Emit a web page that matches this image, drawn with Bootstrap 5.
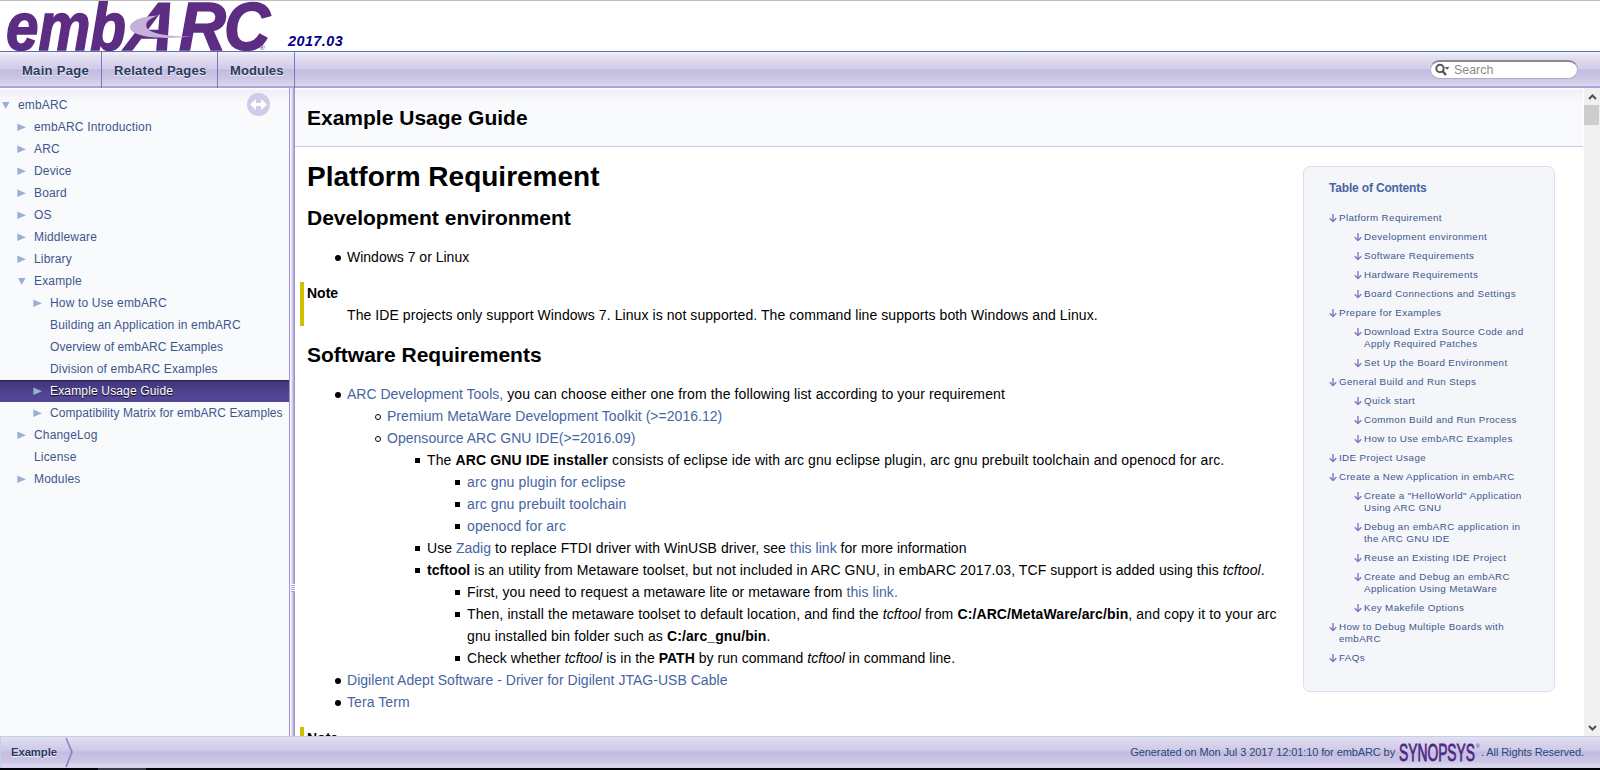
<!DOCTYPE html>
<html lang="en">
<head>
<meta charset="utf-8">
<title>embARC: Example Usage Guide</title>
<link href="https://cdn.jsdelivr.net/npm/bootstrap@5.3.0/dist/css/bootstrap.min.css" rel="stylesheet">
<script src="https://cdn.jsdelivr.net/npm/bootstrap@5.3.0/dist/js/bootstrap.bundle.min.js"></script>
<style>
  body { font: 14px/22px "Liberation Sans", Arial, sans-serif; color: #000; height: 770px; overflow: hidden; background: #fff; }
  a { text-decoration: none; color: #4665a2; }
  .titlebar { height: 52px; border-top: 1px solid #bdbdbd; border-bottom: 1px solid #5373b4; flex: none; }
  .version { font: italic bold 14.4px/20px "Liberation Sans", Arial, sans-serif; color: #00008b; letter-spacing: .45px; margin-left: 14px; padding-top: 30px; }
  .tabbar { height: 36px; flex: none; background: linear-gradient(#f3f1f9 0, #e6e2f2 4px, #d0cbe7 17px, #c3bce0 18px, #cdc7e6 27px, #dcd8ee 34px, #b2a9dc 34px, #a89fd6 36px); }
  .tabbar .nav-link { font: bold 13px/37px "Liberation Sans", Arial, sans-serif; color: #283a5d; padding: 0 0 0 12px; height: 36px; width: 116px; white-space: nowrap; text-shadow: 0 1px 1px rgba(255,255,255,.9); border-right: 1px solid #8073c4; letter-spacing: .29px; }
  .tabbar .nav-item:first-child .nav-link { padding-left: 22px; width: 102px; }
  .tabbar .nav-item:last-child .nav-link { width: 77px; letter-spacing: .12px; }
  .searchbox { width: 148px; height: 19px; border-radius: 10px; background: #fff; border: 1px solid #b3aec4; border-top: 2px solid #8b8993; margin: 8px 22px 0 0; color: #8c8c8c; font-size: 12.4px; }
  .sidepane { width: 289px; background: linear-gradient(#fff 0, #fff 1px, #f0eef8 2px, #f9fafc 14px); flex: none; padding-top: 6px; position: relative; }
  .treerow { height: 22px; line-height: 22px; font-size: 12px; color: #3d578c; white-space: nowrap; letter-spacing: .16px; }
  .treerow svg { width: 10px; height: 10px; fill: #9cafd4; flex: none; margin-right: 7px; }
  .treerow.tight { letter-spacing: .065px; }
  .lvl0 { padding-left: 1px; } .lvl1 { padding-left: 17px; } .lvl2 { padding-left: 33px; }
  .chosen { background: linear-gradient(#241c4a 0, #43367c 2px, #4f4292 12px, #544898 100%); color: #fff; text-shadow: 0 1px 1px #000; }
  .syncbtn { position: absolute; left: 247px; top: 5px; }
  .splitter { width: 6px; flex: none; background: linear-gradient(90deg, #9e93d3 0 1px, #f6f4fb 1px 2px, #dedaf0 3px, #c4bce3 4px, #a398d3 5px, #9e93d3); }
  .grip { width: 4px; height: 8px; margin: 496px 0 0 2px; background: repeating-linear-gradient(#fff 0 1px, #a99fd7 1px 2px); }
  .pagehead { height: 59px; border-bottom: 1px solid #c4cfe5; background: linear-gradient(#fff 0, #fff 1px, #f0eef8 2px, #f9fafc 14px); padding: 0 12px; }
  .pagehead div, h2.sect { font: bold 21px/26px "Liberation Sans", Arial, sans-serif; margin: 0; }
  .pagehead div { padding-top: 17px; }
  h2.sect { margin-top: 16px; }
  h1.chapter { font: bold 28px/32px "Liberation Sans", Arial, sans-serif; margin: 14px 0 12px; }
  h1.chapter + h2.sect { margin-top: 12px; }
  .scrollpane { overflow: hidden; min-width: 0; }
  .article { padding: 0 12px; white-space: nowrap; min-width: 0; }
  .article ul { padding-left: 40px; margin: 0; list-style: none; }
  .article h2 + ul { margin-top: 15px; }
  .article li::before { content: ""; display: inline-block; width: 6px; height: 6px; margin: 0 6px 1.500px -12px; background: #000; border-radius: 50%; }
  .article li li::before { background: none; border: 1.300px solid #000; }
  .article li li li::before { background: #000; border: 0; border-radius: 0; width: 5px; height: 5px; margin: 0 7px 2px -12px; }
  .s1 { letter-spacing: .03px; } .s2 { letter-spacing: .075px; } .s3 { letter-spacing: .115px; }
  .note { border-left: 4px solid #d0c000; margin: 14px 0 0 -7px; padding-left: 3px; }
  .note p { margin: 0 0 0 40px; }
  .tocbox { width: 252px; height: 526px; border: 1px solid #d8dfee; border-radius: 7px; background: #f4f6fa; margin: 19px 28px 0 0; padding: 14px 10px 0 25px; flex: none; }
  .tocbox h3 { font: bold 12px/14px "Liberation Sans", Arial, sans-serif; color: #4665a2; margin: 0 0 17px; letter-spacing: -.17px; }
  .tocrow { font: 9.8px/12px "Liberation Sans", Arial, sans-serif; color: #3d578c; padding-bottom: 7px; white-space: nowrap; letter-spacing: .38px; }
  .tocrow svg { width: 8px; height: 10px; margin: 1px 2px 0 0; flex: none; stroke: #8578c5; fill: none; stroke-width: 1.4; }
  .sub { padding-left: 25px; }
  .scroller { width: 17px; flex: none; background: #f0f0f0; border-left: 1px solid #fff; }
  .thumb { width: 15px; height: 20px; background: #cdcdcd; align-self: flex-start; }
  .footbar { height: 32px; flex: none; border-top: 1px solid #c4cfe5; border-left: 1px solid #c4cfe5; background: linear-gradient(#e2dff0, #cdc7e6 14px, #c3bce0 15px, #cdc7e6 25px, #dcd8ee 29px, #d4cfea); font-size: 11px; line-height: 31px; color: #2a4678; padding-right: 16px; }
  .stamp { letter-spacing: -.1px; }
  .crumb { font: bold 11.3px/31px "Liberation Sans", Arial, sans-serif; letter-spacing: -.08px; color: #283a5d; padding-left: 10px; text-shadow: 0 1px 1px rgba(255,255,255,.9); }
  .bottomstrip { height: 2px; flex: none; background: linear-gradient(90deg, #000008 98px, #383848 98px 146px, #000008 146px); }
</style>
</head>
<body class="d-flex flex-column">
<header class="titlebar d-flex">
  <svg width="274" height="50" viewBox="0 1 274 50" font-family="Liberation Sans, Arial, sans-serif" font-weight="bold" font-style="italic" fill="#5c2d83" stroke="#5c2d83" stroke-width="1.6">
    <text x="6" y="49.500" font-size="68" textLength="120" lengthAdjust="spacingAndGlyphs">emb</text>
    <text transform="translate(124 49.500) skewX(-13)" font-size="68" textLength="47" lengthAdjust="spacingAndGlyphs">A</text>
    <text x="179" y="49.500" font-size="68" textLength="47" lengthAdjust="spacingAndGlyphs">R</text>
    <text x="224" y="49.500" font-size="68" textLength="46" lengthAdjust="spacingAndGlyphs">C</text>
    <path d="M158 15.500C142 16 130 21 130 27.500C131 37 160 40 192 36.500C168 37 148 33 146.500 27C145 22 150 18 158 15.500Z" fill="#c7b1d9" stroke="none"/>
    <text x="259" y="50" font-size="8" font-style="normal" font-weight="normal" stroke="none">®</text>
  </svg>
  <div class="version">2017.03</div>
</header>
<nav class="tabbar d-flex justify-content-between">
  <ul class="nav flex-nowrap">
    <li class="nav-item"><a class="nav-link" href="#">Main Page</a></li>
    <li class="nav-item"><a class="nav-link" href="#">Related Pages</a></li>
    <li class="nav-item"><a class="nav-link" href="#">Modules</a></li>
  </ul>
  <div class="searchbox d-flex align-items-center">
    <svg width="18" height="14" viewBox="0 0 18 14" class="ms-1"><circle cx="5" cy="5.5" r="3.7" fill="none" stroke="#555" stroke-width="2"/><path d="M7.5 8L11 12" stroke="#555" stroke-width="2.4"/><path d="M9.800 4h4.600l-2.300 2.800z" fill="#555"/></svg>
    <span>&#8202;Search</span>
  </div>
</nav>
<div class="d-flex flex-grow-1 overflow-hidden">
  <aside class="sidepane" id="tree">
    <svg class="syncbtn" width="24" height="24" viewBox="0 0 24 24"><circle cx="11.500" cy="11.500" r="11.500" fill="#d0cbe8"/><path d="M3 11.500L9 6V10H14V6L20 11.500L14 17V13H9V17Z" fill="#fff"/></svg>
  </aside>
  <div class="splitter"><div class="grip"></div></div>
  <div class="scrollpane flex-grow-1">
    <div class="pagehead"><div>Example Usage Guide</div></div>
    <div class="d-flex align-items-start">
      <main class="article flex-grow-1">
        <h1 class="chapter">Platform Requirement</h1>
        <h2 class="sect">Development environment</h2>
        <ul><li>Windows 7 or Linux</li></ul>
        <div class="note"><b>Note</b><p class="s2">The IDE projects only support Windows 7. Linux is not supported. The command line supports both Windows and Linux.</p></div>
        <h2 class="sect">Software Requirements</h2>
        <ul>
          <li><a href="#">ARC Development Tools,</a><span class="s3"> you can choose either one from the following list according to your requirement</span>
            <ul>
              <li><a href="#" class="s1">Premium MetaWare Development Toolkit (&gt;=2016.12)</a></li>
              <li><a href="#" class="s1">Opensource ARC GNU IDE(&gt;=2016.09)</a>
                <ul>
                  <li class="s3">The <b>ARC GNU IDE installer</b> consists of eclipse ide with arc gnu eclipse plugin, arc gnu prebuilt toolchain and openocd for arc.
                    <ul>
                      <li><a href="#">arc gnu plugin for eclipse</a></li>
                      <li><a href="#">arc gnu prebuilt toolchain</a></li>
                      <li><a href="#">openocd for arc</a></li>
                    </ul></li>
                  <li class="s1">Use <a href="#">Zadig</a> to replace FTDI driver with WinUSB driver, see <a href="#">this link</a> for more information</li>
                  <li class="s2"><b>tcftool</b> is an utility from Metaware toolset, but not included in ARC GNU, in embARC 2017.03, TCF support is added using this <i>tcftool</i>.
                    <ul>
                      <li class="s2">First, you need to request a metaware lite or metaware from <a href="#">this link.</a></li>
                      <li class="s3">Then, install the metaware toolset to default location, and find the <i>tcftool</i> from <b>C:/ARC/MetaWare/arc/bin</b>, and copy it to your arc<br>gnu installed bin folder such as <b>C:/arc_gnu/bin</b>.</li>
                      <li class="s1">Check whether <i>tcftool</i> is in the <b>PATH</b> by run command <i>tcftool</i> in command line.</li>
                    </ul></li>
                </ul></li>
            </ul></li>
          <li class="s1"><a href="#">Digilent Adept Software - Driver for Digilent JTAG-USB Cable</a></li>
          <li class="s2"><a href="#">Tera Term</a></li>
        </ul>
        <div class="note"><b>Note</b></div>
      </main>
      <div class="tocbox" id="toc"><h3>Table of Contents</h3></div>
    </div>
  </div>
  <div class="scroller d-flex flex-column align-items-center">
    <svg width="9" height="17" viewBox="0 0 9 17"><path d="M1 11L4.500 7.500L8 11" fill="none" stroke="#505050" stroke-width="2"/></svg>
    <div class="thumb"></div>
    <svg class="mt-auto" width="9" height="17" viewBox="0 0 9 17"><path d="M1 7L4.500 10.500L8 7" fill="none" stroke="#505050" stroke-width="2"/></svg>
  </div>
</div>
<footer class="footbar d-flex justify-content-between">
  <div class="d-flex"><span class="crumb">Example</span><svg width="9" height="31" viewBox="0 0 9 31" class="ms-2"><path d="M1 1L7 15L1 30" fill="none" stroke="#8b80c8" stroke-width="1.6"/></svg></div>
  <div class="d-flex stamp">
    <span>Generated on Mon Jul 3 2017 12:01:10 for embARC by</span>
    <svg width="82" height="31" viewBox="0 0 82 31" class="ms-1" letter-spacing="0" font-family="Liberation Sans, Arial, sans-serif" fill="#4f2683">
      <text x="0" y="24" font-size="24" stroke="#4f2683" stroke-width=".8" textLength="76" lengthAdjust="spacingAndGlyphs">SYNOPSYS</text>
      <text x="77" y="11" font-size="5">®</text>
    </svg>
    <span>. All Rights Reserved.</span>
  </div>
</footer>
<div class="bottomstrip"></div>
<script>
  const open = '<svg viewBox="0 0 10 10"><path d="M1 2H8.500L4.800 9Z"/></svg>', shut = '<svg viewBox="0 0 10 10"><path d="M.3 1.500L9 5.300L.3 9Z"/></svg>', none = '<svg></svg>';
  const tree = [[0,open,'embARC'],[1,shut,'embARC Introduction'],[1,shut,'ARC'],[1,shut,'Device'],[1,shut,'Board'],[1,shut,'OS'],[1,shut,'Middleware'],[1,shut,'Library'],[1,open,'Example'],[2,shut,'How to Use embARC'],[2,none,'Building an Application in embARC'],[2,none,'Overview of embARC Examples','tight'],[2,none,'Division of embARC Examples'],[2,shut,'Example Usage Guide','chosen'],[2,shut,'Compatibility Matrix for embARC Examples','tight'],[1,shut,'ChangeLog'],[1,none,'License'],[1,shut,'Modules']];
  document.getElementById('tree').insertAdjacentHTML('beforeend', tree.map(([l,i,t,c='']) => `<div class="treerow d-flex align-items-center lvl${l} ${c}">${i}<span>${t}</span></div>`).join(''));

  const toc = [[0,'Platform Requirement'],[1,'Development environment'],[1,'Software Requirements'],[1,'Hardware Requirements'],[1,'Board Connections and Settings'],[0,'Prepare for Examples'],[1,'Download Extra Source Code and<br>Apply Required Patches'],[1,'Set Up the Board Environment'],[0,'General Build and Run Steps'],[1,'Quick start'],[1,'Common Build and Run Process'],[1,'How to Use embARC Examples'],[0,'IDE Project Usage'],[0,'Create a New Application in embARC'],[1,'Create a "HelloWorld" Application<br>Using ARC GNU'],[1,'Debug an embARC application in<br>the ARC GNU IDE'],[1,'Reuse an Existing IDE Project'],[1,'Create and Debug an embARC<br>Application Using MetaWare'],[1,'Key Makefile Options'],[0,'How to Debug Multiple Boards with<br>embARC'],[0,'FAQs']];
  document.getElementById('toc').insertAdjacentHTML('beforeend', toc.map(([s,t]) => `<div class="tocrow d-flex ${s ? 'sub' : ''}"><svg viewBox="0 0 8 10"><path d="M4 1V9M.7 5.200L4 8.600L7.300 5.200"/></svg><span>${t}</span></div>`).join(''));
</script>
</body>
</html>
